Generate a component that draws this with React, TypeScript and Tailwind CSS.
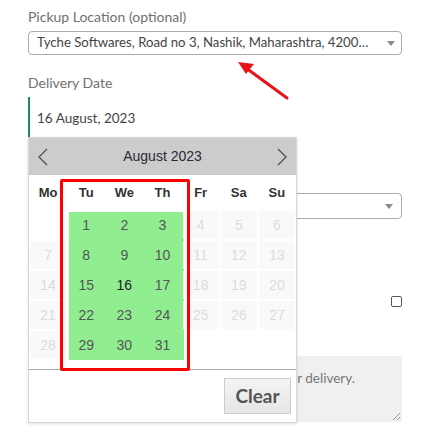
import React from "react";

const form = { fontFamily: "Lato, 'Open Sans', sans-serif" } as const;
const arial = { fontFamily: "'Liberation Sans', Arial, sans-serif" } as const;

const rows: (number | null)[][] = [
  [null, 1, 2, 3, 4, 5, 6],
  [7, 8, 9, 10, 11, 12, 13],
  [14, 15, 16, 17, 18, 19, 20],
  [21, 22, 23, 24, 25, 26, 27],
  [28, 29, 30, 31, null, null, null],
];

function Calendar() {
  return (
    <div
      className="absolute left-[28px] top-[137px] w-[269px] h-[286px] bg-white border border-[#d6d6d6] shadow-[0_1px_3px_rgba(0,0,0,0.12)] flex flex-col"
      style={arial}
    >
      <div className="h-[37px] shrink-0 bg-[#cccccc] flex items-center justify-between px-[8px]">
        <svg width="12" height="18" viewBox="0 0 12 18">
          <polyline points="10,1 2,9 10,17" fill="none" stroke="#555" strokeWidth="1.4" />
        </svg>
        <span className="text-[14px] text-[#2a2a3a]">August 2023</span>
        <svg width="12" height="18" viewBox="0 0 12 18">
          <polyline points="2,1 10,9 2,17" fill="none" stroke="#555" strokeWidth="1.4" />
        </svg>
      </div>
      <div className="grid grid-cols-7 h-[36px] shrink-0 items-center">
        {["Mo", "Tu", "We", "Th", "Fr", "Sa", "Su"].map((d) => (
          <div key={d} className="text-center text-[13px] font-bold text-[#333]">
            {d}
          </div>
        ))}
      </div>
      <div className="relative shrink-0">
        <div className="absolute left-[40px] top-[1px] w-[115px] h-[148px] bg-[#90ee90]" />
        <div className="relative grid grid-cols-7 gap-[2px] px-[1px]">
          {rows.flat().map((n, i) => {
            const col = i % 7;
            const on = n !== null && col >= 1 && col <= 3;
            return (
              <div
                key={i}
                className={
                  "h-[28px] flex items-center justify-center text-[14px] " +
                  (on
                    ? n === 16
                      ? "text-[#222]"
                      : "text-[#555]"
                    : n === null
                    ? ""
                    : "bg-[#f9f9f9] text-[#dcdcdc]")
                }
              >
                {n ?? ""}
              </div>
            );
          })}
        </div>
      </div>
      <div className="mt-[10px] border-t border-[#aaaaaa] flex-1 flex justify-end items-start pt-[8px] pr-[5px]">
        <button
          className="w-[67px] h-[36px] border border-[#cccccc] bg-[linear-gradient(#f4f4f4,#e6e6e6)] text-[19px] font-bold text-[#555]"
          style={form}
        >
          Clear
        </button>
      </div>
    </div>
  );
}

export default function App() {
  return (
    <div className="relative w-[423px] h-[432px] bg-white overflow-hidden" style={form}>
      <div className="px-[28px] pr-[21px] pt-[8px] flex flex-col">
        <label className="text-[14px] text-[#707070] leading-[18px]">Pickup Location (optional)</label>
        <div className="mt-[5px] h-[24px] border border-[#aaaaaa] rounded-[4px] flex items-center pl-[8px] pr-[6px]">
          <span className="flex-1 truncate text-[13.2px] text-[#444]">
            Tyche Softwares, Road no 3, Nashik, Maharashtra, 420003, India
          </span>
          <svg width="8" height="5" viewBox="0 0 8 5" className="ml-[14px] shrink-0">
            <polygon points="0,0 8,0 4,5" fill="#888" />
          </svg>
        </div>
        <label className="mt-[19px] text-[14px] text-[#707070] leading-[18px]">Delivery Date</label>
        <div className="mt-[5px] h-[42px] border-l-2 border-[#1e8a5e] flex items-center pl-[7px] text-[13.5px] text-[#444]">
          16 August, 2023
        </div>
        <label className="mt-[28px] text-[14px] text-[#707070] leading-[18px]">Delivery Time</label>
        <div className="mt-[8px] h-[26px] border border-[#aaaaaa] rounded-[4px] flex items-center justify-end pr-[8px]">
          <svg width="8" height="5" viewBox="0 0 8 5">
            <polygon points="0,0 8,0 4,5" fill="#888" />
          </svg>
        </div>
        <div className="mt-[76px] h-[12px] flex items-center justify-between">
          <span className="text-[14px] text-[#707070]">Ship to a different address?</span>
          <span className="w-[11px] h-[11px] border border-[#555] rounded-[2px] bg-white" />
        </div>
        <div className="mt-[49px] h-[66px] bg-[#f0f0f0] relative pl-[9px] pt-[12px] text-[13.5px] text-[#777] leading-[20px]">
          <span className="block whitespace-nowrap">Notes about your order, e.g. special notes for delivery.</span>
          <svg width="9" height="9" viewBox="0 0 9 9" className="absolute right-[1px] bottom-[1px]">
            <line x1="1" y1="8" x2="8" y2="1" stroke="#777" strokeWidth="0.8" />
            <line x1="5" y1="8" x2="8" y2="5" stroke="#777" strokeWidth="0.8" />
          </svg>
        </div>
      </div>

      <Calendar />

      <div className="absolute left-[60px] top-[179px] w-[130px] h-[192px] border-[3px] border-[#ff0000] rounded-[2px]" />

      <svg className="absolute left-0 top-0" width="423" height="432" viewBox="0 0 423 432">
        <line x1="287" y1="98" x2="246" y2="68" stroke="#e8141c" strokeWidth="3" strokeLinecap="round" />
        <polygon points="238,62 254,64 246,74" fill="#e8141c" />
      </svg>
    </div>
  );
}
